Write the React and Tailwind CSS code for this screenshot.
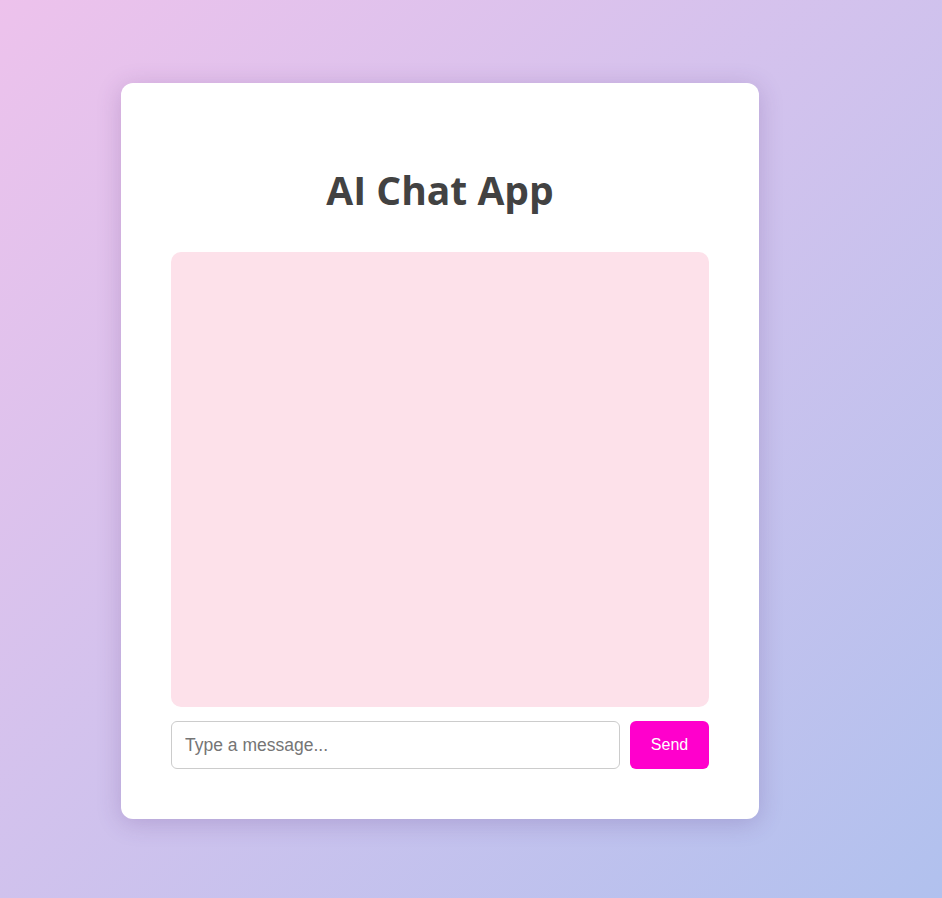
export default function App() {
    return (
        <div className="min-h-[898px] w-full bg-gradient-to-br from-[#edc2ec] to-[#b1c1ee] pt-[83px] pl-[121px]">
            <div className="flex w-[638px] flex-col rounded-[12px] bg-white p-[50px] shadow-[0_4px_24px_rgba(80,40,120,0.22)]">
                <h1 className="mt-[29px] mb-[34px] text-center text-[39px] leading-[56px] font-bold text-[#424242] font-['Open_Sans',sans-serif]">
                    AI Chat App
                </h1>

                {/* Messages */}
                <div className="h-[455px] w-full rounded-[10px] bg-[#fde1ea]" />

                {/* Input row */}
                <div className="mt-[14px] flex gap-[10px]">
                    <input
                        type="text"
                        placeholder="Type a message..."
                        className="h-[48px] flex-1 rounded-[6px] border border-[#cccccc] px-[13px] text-[17.5px] text-[#333] placeholder:text-[#757575] outline-none font-['Liberation_Sans',Arial,sans-serif]"
                    />
                    <button className="h-[48px] w-[79px] rounded-[6px] bg-[#ff00cc] text-[16px] text-white font-['Liberation_Sans',Arial,sans-serif]">
                        Send
                    </button>
                </div>
            </div>
        </div>
    );
}
